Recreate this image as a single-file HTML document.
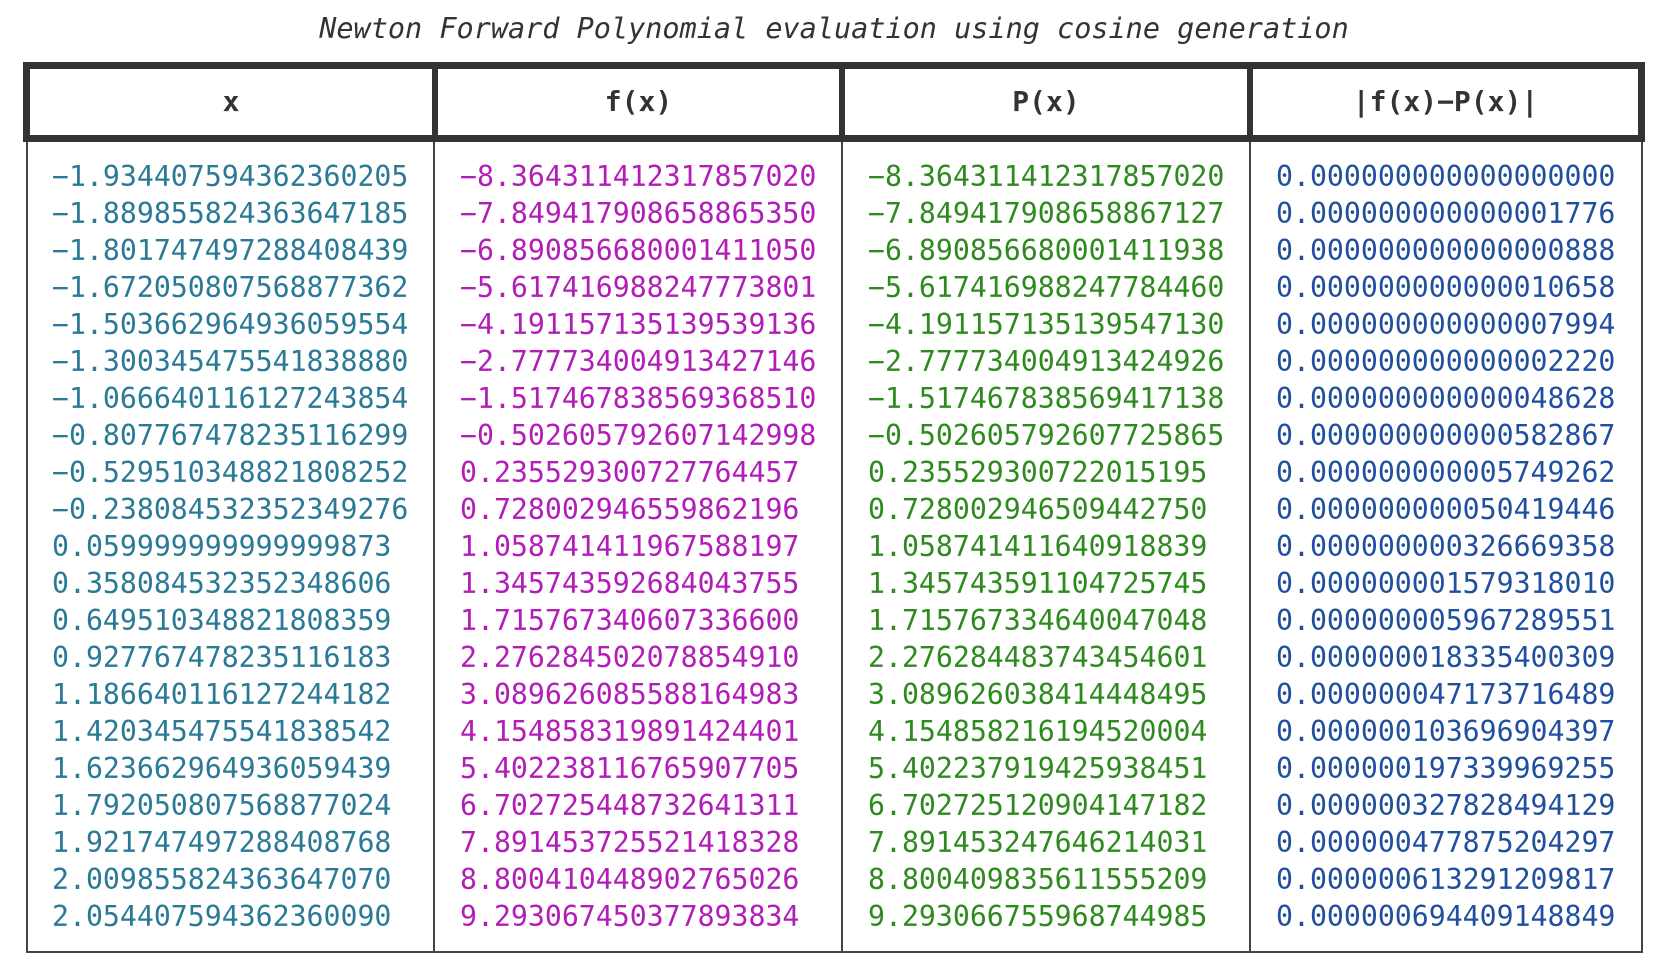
<!DOCTYPE html>
<html><head><meta charset="utf-8"><style>
body{margin:0;width:1654px;height:968px;background:#fff;position:relative;overflow:hidden;font-family:"DejaVu Sans Mono","Liberation Mono",monospace;}
.t{position:absolute;left:0;width:1668px;top:12px;text-align:center;font-size:28.5px;font-style:italic;color:#333;line-height:34px;}
.hb{position:absolute;left:23px;top:62px;width:1608px;height:66px;border:7px solid #333;}
.hd{position:absolute;top:62px;width:6px;height:80px;background:#333;}
.hl{position:absolute;top:69px;height:66px;line-height:66px;text-align:center;font-weight:bold;font-size:28px;color:#333;}
.bb{position:absolute;left:26px;top:142px;width:1613px;height:809px;border:2px solid #444;border-top:none;}
.bd{position:absolute;top:142px;width:2px;height:811px;background:#444;}
.col{position:absolute;top:158px;font-size:28.2px;line-height:37px;white-space:pre;}
</style></head><body>
<div class="t">Newton Forward Polynomial evaluation using cosine generation</div>
<div class="bb"></div>
<div class="bd" style="left:433px"></div>
<div class="bd" style="left:841px"></div>
<div class="bd" style="left:1249px"></div>
<div class="hb"></div>
<div class="hd" style="left:432px"></div>
<div class="hd" style="left:839px"></div>
<div class="hd" style="left:1247px"></div>
<div class="hl" style="left:30px;width:402px">x</div>
<div class="hl" style="left:438px;width:401px">f(x)</div>
<div class="hl" style="left:845px;width:402px">P(x)</div>
<div class="hl" style="left:1253px;width:385px">|f(x)−P(x)|</div>
<div class="col" style="left:52px;color:#2a7a96">−1.934407594362360205
−1.889855824363647185
−1.801747497288408439
−1.672050807568877362
−1.503662964936059554
−1.300345475541838880
−1.066640116127243854
−0.807767478235116299
−0.529510348821808252
−0.238084532352349276
0.059999999999999873
0.358084532352348606
0.649510348821808359
0.927767478235116183
1.186640116127244182
1.420345475541838542
1.623662964936059439
1.792050807568877024
1.921747497288408768
2.009855824363647070
2.054407594362360090</div>
<div class="col" style="left:460px;color:#b21db8">−8.364311412317857020
−7.849417908658865350
−6.890856680001411050
−5.617416988247773801
−4.191157135139539136
−2.777734004913427146
−1.517467838569368510
−0.502605792607142998
0.235529300727764457
0.728002946559862196
1.058741411967588197
1.345743592684043755
1.715767340607336600
2.276284502078854910
3.089626085588164983
4.154858319891424401
5.402238116765907705
6.702725448732641311
7.891453725521418328
8.800410448902765026
9.293067450377893834</div>
<div class="col" style="left:868px;color:#2e8a1e">−8.364311412317857020
−7.849417908658867127
−6.890856680001411938
−5.617416988247784460
−4.191157135139547130
−2.777734004913424926
−1.517467838569417138
−0.502605792607725865
0.235529300722015195
0.728002946509442750
1.058741411640918839
1.345743591104725745
1.715767334640047048
2.276284483743454601
3.089626038414448495
4.154858216194520004
5.402237919425938451
6.702725120904147182
7.891453247646214031
8.800409835611555209
9.293066755968744985</div>
<div class="col" style="left:1276px;color:#1f4f9e">0.000000000000000000
0.000000000000001776
0.000000000000000888
0.000000000000010658
0.000000000000007994
0.000000000000002220
0.000000000000048628
0.000000000000582867
0.000000000005749262
0.000000000050419446
0.000000000326669358
0.000000001579318010
0.000000005967289551
0.000000018335400309
0.000000047173716489
0.000000103696904397
0.000000197339969255
0.000000327828494129
0.000000477875204297
0.000000613291209817
0.000000694409148849</div>
</body></html>
